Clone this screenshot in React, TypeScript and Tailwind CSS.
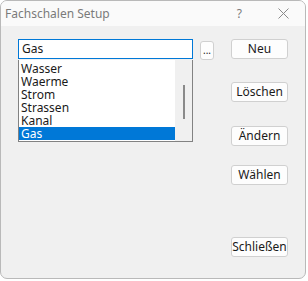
import React from "react";

const font = { fontFamily: '"Segoe UI", "Noto Sans", "Open Sans", sans-serif' };

function Btn({ label, className = "" }: { label: string; className?: string }) {
  return (
    <div
      className={`flex h-[20px] w-[57px] items-center justify-center rounded-[3px] border border-[#d0d0d0] bg-[#fdfdfd] text-[12px] text-[#1a1a1a] ${className}`}
    >
      {label}
    </div>
  );
}

export default function App() {
  const items = ["Wasser", "Waerme", "Strom", "Strassen", "Kanal", "Gas"];
  return (
    <div className="h-[281px] w-[308px] bg-white" style={font}>
      <div className="flex h-[279px] w-[306px] flex-col overflow-hidden rounded-b-[7px] rounded-t-[7px] border border-[#b9b9b9] bg-[#f0f0f0]">
        <div className="flex h-[25px] shrink-0 items-center bg-[#fafafa]">
          <span className="ml-[4px] text-[12px] text-[#7a7a7a]">Fachschalen Setup</span>
          <span className="ml-auto mr-[36px] text-[12px] text-[#7a7a7a]">?</span>
          <svg width="11" height="11" viewBox="0 0 11 11" className="mr-[16px]">
            <path d="M0.5 0.5 L10.5 10.5 M10.5 0.5 L0.5 10.5" stroke="#8a8a8a" strokeWidth="1" />
          </svg>
        </div>
        <div className="flex flex-1 pl-[17px] pt-[13px]">
          <div className="flex flex-col">
            <div className="flex items-start">
              <div className="flex h-[20px] w-[175px] items-center border border-[#0078d7] bg-white pl-[3px] text-[12px] text-[#1a1a1a]">
                Gas
              </div>
              <div className="ml-[7px] mt-[2px] flex h-[19px] w-[14px] items-end justify-center rounded-[3px] border border-[#d0d0d0] bg-[#fdfdfd] pb-[4px] text-[10px] leading-none text-[#1a1a1a]">
                ...
              </div>
            </div>
            <div className="flex h-[82px] w-[175px] border border-t-0 border-[#828282] bg-white">
              <div className="flex w-[156px] flex-col pt-[2px]">
                {items.map((it, i) => (
                  <div
                    key={it}
                    className={`h-[13px] pl-[2px] text-[12px] leading-[13px] ${
                      i === items.length - 1 ? "bg-[#0078d7] text-white" : "text-[#1a1a1a]"
                    }`}
                  >
                    {it}
                  </div>
                ))}
              </div>
              <div className="flex flex-1 justify-center bg-[#f0f0f0] pt-[25px]">
                <div className="h-[34px] w-[2px] bg-[#8a8a8a]" />
              </div>
            </div>
          </div>
          <div className="ml-[17px] flex flex-col">
            <Btn label="Neu" />
            <Btn label="Löschen" className="mt-[23px]" />
            <Btn label="Ändern" className="mt-[24px]" />
            <Btn label="Wählen" className="mt-[19px]" />
            <Btn label="Schließen" className="mt-[52px]" />
          </div>
        </div>
      </div>
    </div>
  );
}
